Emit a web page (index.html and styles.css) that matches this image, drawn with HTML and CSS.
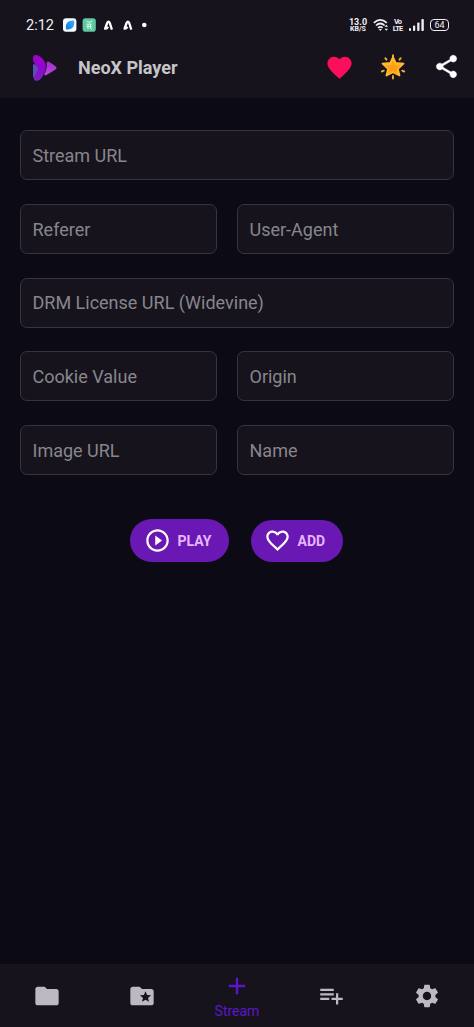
FILE: index.html
```html
<!DOCTYPE html>
<html lang="en">
<head>
<meta charset="utf-8">
<title>NeoX Player</title>
<link rel="stylesheet" href="styles.css">
</head>
<body>
<div class="app">
  <header class="top">
    <div class="status">
      <span class="clock">2:12</span>
      <svg class="apps" width="90" height="16" viewBox="0 0 90 16">
        <defs><linearGradient id="leaf" x1="0" y1="1" x2="1" y2="0"><stop offset="0" stop-color="#1673dd"/><stop offset="1" stop-color="#38b4ff"/></linearGradient></defs>
        <rect x="0" y="1.3" width="13.4" height="13.4" rx="3" fill="#f7fbff"/>
        <path d="M3.200 12.500C1.800 6.500 5 3.300 11 3.600 12.200 9.500 9 13.300 3.200 12.500z" fill="url(#leaf)"/>
        <rect x="19.600" y="1.300" width="13.200" height="13.400" rx="2.800" fill="#5fc9a0"/>
        <path d="M23.300 3.800q1.200 1.500 2.900 1.400 1.700.1 2.900-1.400M23.500 7.200h5.400M25 7.500v4.500M27.500 7.500V11q0 1 1.500 1M23.600 9.500h5" fill="none" stroke="#d8fff0" stroke-width="1"/>
        <g fill="none" stroke="#fff" stroke-width="2.300" stroke-linejoin="round">
          <path d="M48.900 12.600L46.800 6Q45.500 3.400 44.200 6L42 12M41.300 11.500Q43.800 12.200 45 9.700"/>
          <path d="M68.300 12.600L66.200 6Q64.900 3.400 63.600 6L61.400 12M60.700 11.500Q63.200 12.200 64.400 9.700"/>
        </g>
        <circle cx="81.300" cy="8" r="2.300" fill="#fff"/>
      </svg>
      <div class="system">
        <span class="speed"><b>13.0</b><small>KB/S</small></span>
        <svg width="16" height="14" viewBox="0 0 16 14" fill="none" stroke="#eee" stroke-width="1.700"><path d="M.8 4.800q6.500-6 13 0M3 7.500q4.300-4 8.600 0M5 9.900q2.300-2 4.600 0"/><path d="M5.700 11h3.200L7.300 13z" fill="#eee" stroke="none"/><path d="M13.300 6.700l1.800 2h-3.600zM13.300 12.700l1.800-2h-3.600z" fill="#eee" stroke="none"/></svg>
        <span class="volte"><b>Vo</b><b>LTE</b></span>
        <svg class="signal" width="15" height="12" viewBox="0 0 15 12" fill="#eee"><rect y="9" width="2" height="3" rx=".8"/><rect x="4" y="6.500" width="2.200" height="5.500" rx=".8"/><rect x="8.200" y="3.500" width="2.300" height="8.500" rx=".8"/><rect x="12.400" width="2.400" height="12" rx=".8"/></svg>
        <span class="battery">64</span>
      </div>
    </div>
    <div class="bar">
      <svg class="logo" width="26" height="28" viewBox="0 0 26 28">
        <defs>
          <linearGradient id="front" x1="0" y1="0" x2="0" y2="1"><stop offset="0" stop-color="#a500c8"/><stop offset=".5" stop-color="#8a08d0"/><stop offset="1" stop-color="#7a22c0"/></linearGradient>
          <linearGradient id="back" x1="0" y1="0" x2="0" y2="1"><stop offset="0" stop-color="#a32ccc"/><stop offset="1" stop-color="#b94bdc"/></linearGradient>
        </defs>
        <path d="M14.500 9Q15 6.500 17.500 8L23.500 12.300Q25.500 14 23.500 15.500L15 20.800Q11.500 22.300 12.500 19.500 15.500 14 14.500 9z" fill="url(#back)"/>
        <path d="M1 12Q1 9 3.500 10.500L8 15 5 24Q1 25 1 22z" fill="#5b4cb8"/>
        <path d="M1 3.500C1 .5 5 0 8 2.500 13.500 6.500 15.500 12 12.500 18.500 10.500 22.500 9 26.500 5 26.800 1 27 1 23 3.500 20.500Q7 16 5.500 13L2.500 9.500Q1 8 1 3.500z" fill="url(#front)"/>
      </svg>
      <h1>NeoX Player</h1>
      <svg class="heart" width="29" height="29" viewBox="0 0 24 24"><path fill="#fb0e5c" d="M12 21.350l-1.450-1.320C5.400 15.360 2 12.280 2 8.500 2 5.420 4.420 3 7.500 3c1.740 0 3.410.81 4.500 2.090C13.090 3.810 14.760 3 16.500 3 19.580 3 22 5.420 22 8.500c0 3.780-3.400 6.860-8.550 11.540L12 21.350z"/></svg>
      <svg class="star" width="26" height="26" viewBox="0 0 26 26">
        <path d="M13 22v2.500M5.300 4.200L6.500 5.700M20.700 4.200L19.500 5.700M1.800 17.500l2-.8M24.200 17.500l-2-.8M13 1.200v2" stroke="#e8ae2c" stroke-width="1.900" stroke-linecap="round"/>
        <path d="M13 3l2.700 5.900 7.800.8-5.600 5.200 1.600 6.600L13 18.300l-6.500 3.200 1.600-6.600-5.600-5.200 7.800-.8z" fill="#ffb92e" stroke="#ffb92e" stroke-width="1.800" stroke-linejoin="round"/>
        <path d="M13 7.500l2 4 4.600.6-3.300 3 .8 4L13 17l-4.100 2.100.8-4-3.300-3 4.600-.6z" fill="#ffa012" stroke="#ffa012" stroke-linejoin="round"/>
      </svg>
      <svg class="share" width="27" height="27" viewBox="0 0 24 24"><path fill="#fff" stroke="#fff" stroke-width=".45" d="M18 16.080c-.76 0-1.440.3-1.960.77L8.910 12.700c.05-.23.09-.46.09-.7s-.04-.47-.09-.7l7.050-4.110c.54.5 1.250.81 2.040.81 1.660 0 3-1.340 3-3s-1.340-3-3-3-3 1.340-3 3c0 .24.040.47.090.7L8.040 9.810C7.500 9.310 6.790 9 6 9c-1.660 0-3 1.340-3 3s1.340 3 3 3c.79 0 1.500-.31 2.040-.81l7.120 4.160c-.05.21-.08.43-.08.65 0 1.610 1.310 2.920 2.920 2.920s2.920-1.310 2.920-2.920-1.310-2.920-2.920-2.920z"/></svg>
    </div>
  </header>

  <main class="main">
    <div class="form">
      <div class="field wide">Stream URL</div>
      <div class="field">Referer</div>
      <div class="field">User-Agent</div>
      <div class="field wide">DRM License URL (Widevine)</div>
      <div class="field">Cookie Value</div>
      <div class="field">Origin</div>
      <div class="field">Image URL</div>
      <div class="field">Name</div>
    </div>
    <div class="actions">
      <button class="pill play"><svg width="27" height="27" viewBox="0 0 24 24"><path fill="#fff" d="M10 16.500l6-4.500-6-4.500v9zM12 2C6.480 2 2 6.480 2 12s4.480 10 10 10 10-4.480 10-10S17.520 2 12 2zm0 18c-4.410 0-8-3.590-8-8s3.590-8 8-8 8 3.590 8 8-3.590 8-8 8z"/></svg><span>PLAY</span></button>
      <button class="pill add"><svg width="27" height="27" viewBox="0 0 24 24"><path fill="#fff" d="M16.500 3c-1.740 0-3.410.81-4.500 2.090C10.910 3.810 9.240 3 7.500 3 4.420 3 2 5.420 2 8.500c0 3.780 3.400 6.860 8.550 11.540L12 21.350l1.450-1.320C18.600 15.360 22 12.280 22 8.500 22 5.420 19.580 3 16.500 3zm-4.400 15.550l-.1.100-.1-.1C7.140 14.240 4 11.390 4 8.500 4 6.500 5.500 5 7.500 5c1.540 0 3.040.99 3.570 2.360h1.870C13.460 5.990 14.960 5 16.500 5c2 0 3.500 1.500 3.500 3.500 0 2.890-3.140 5.740-7.900 10.050z"/></svg><span>ADD</span></button>
    </div>
  </main>

  <nav class="nav">
    <a><svg width="28" height="28" viewBox="0 0 24 24"><path d="M10 4H4c-1.100 0-1.990.9-1.990 2L2 18c0 1.100.9 2 2 2h16c1.100 0 2-.9 2-2V8c0-1.100-.9-2-2-2h-8l-2-2z"/></svg></a>
    <a><svg width="28" height="28" viewBox="0 0 24 24"><path d="M20 6h-8l-2-2H4c-1.100 0-1.990.9-1.990 2L2 18c0 1.100.9 2 2 2h16c1.100 0 2-.9 2-2V8c0-1.100-.9-2-2-2zm-2.060 11L15 15.280 12.060 17l.78-3.330-2.590-2.240 3.410-.29L15 8l1.340 3.140 3.410.29-2.590 2.240.78 3.330z"/></svg></a>
    <a class="active"><svg width="28" height="28" viewBox="0 0 24 24"><path d="M19 13h-6v6h-2v-6H5v-2h6V5h2v6h6v2z"/></svg><span>Stream</span></a>
    <a><svg width="27" height="27" viewBox="0 0 24 24"><path d="M14 10H2v2h12v-2zm0-4H2v2h12V6zm4 8v-4h-2v4h-4v2h4v4h2v-4h4v-2h-4zM2 16h8v-2H2v2z"/></svg></a>
    <a><svg width="28" height="28" viewBox="0 0 24 24"><path d="M19.140 12.940c.04-.3.060-.61.060-.94 0-.32-.02-.64-.07-.94l2.030-1.580c.18-.14.230-.41.120-.61l-1.920-3.320c-.12-.22-.37-.29-.59-.22l-2.390.96c-.5-.38-1.030-.7-1.620-.94l-.36-2.540c-.04-.24-.24-.41-.48-.41h-3.840c-.24 0-.43.170-.47.410l-.36 2.540c-.59.240-1.130.57-1.620.94l-2.390-.96c-.22-.08-.47 0-.59.220L2.740 8.870c-.12.210-.08.470.12.610l2.030 1.580c-.05.3-.09.63-.09.94s.02.640.07.940l-2.030 1.580c-.18.140-.23.410-.12.610l1.920 3.320c.12.220.37.290.59.220l2.390-.96c.5.380 1.030.7 1.620.94l.36 2.540c.05.240.24.410.48.410h3.840c.24 0 .44-.17.47-.41l.36-2.540c.59-.24 1.130-.56 1.620-.94l2.390.96c.22.080.47 0 .59-.22l1.920-3.320c.12-.22.070-.47-.12-.61l-2.010-1.580zM12 15.600c-1.980 0-3.600-1.620-3.600-3.600s1.620-3.600 3.600-3.600 3.600 1.620 3.600 3.600-1.620 3.600-3.600 3.600z"/></svg></a>
  </nav>
</div>
</body>
</html>
```
FILE: styles.css
```css
* { box-sizing: border-box; }
body { margin: 0; background: #0c0a14; font-family: Roboto, "Liberation Sans", sans-serif; }
svg { display: block; flex: none; }
.app { width: 474px; height: 1027px; display: flex; flex-direction: column; }

.top { height: 98px; background: #16131d; flex: none; }
.status { height: 37px; padding: 13px 25px 0 26px; display: flex; align-items: center; color: #f0eff2; }
.clock { width: 37px; font-size: 14.5px; line-height: 16px; padding-top: 1px; }
.system { margin-left: auto; display: flex; align-items: center; }
.speed { width: 18px; margin-right: 6px; display: flex; flex-direction: column; align-items: center; }
.speed b { font-size: 9px; line-height: 8px; font-weight: 700; }
.speed small { font-size: 7px; line-height: 7px; font-weight: 700; }
.volte { width: 9px; margin: 0 7px 0 4px; display: flex; flex-direction: column; align-items: center; }
.volte b { font-size: 7.5px; line-height: 7px; font-weight: 700; letter-spacing: -.9px; }
.signal { margin-right: 6px; }
.battery { width: 19px; height: 12px; border: 1px solid #eee; border-radius: 4px; font-size: 9px; line-height: 11px; text-align: center; }

.bar { height: 61px; padding: 0 14px 0 32px; display: flex; align-items: flex-start; }
.logo { margin-top: 17px; }
.bar h1 { margin: 20px 0 0 20px; font-size: 18px; line-height: 22px; font-weight: 700; color: #c6c5ca; flex: 1; }
.heart { margin: 16px 26px 0 0; }
.star { margin: 17px 27px 0 0; }
.share { margin: 16px 0 0; }

.main { flex: 1; padding: 32px 20px 0; }
.form { display: grid; grid-template-columns: 197px 217px; column-gap: 20px; row-gap: 23.750px; }
.wide { grid-column: span 2; }
.field { height: 50px; padding: .6px 12px 0 11.500px; border: 1px solid #37343e; border-radius: 7px; background: #16131d; color: #88868c; font-size: 18px; display: flex; align-items: center; }
.actions { margin-top: 44px; padding-left: 110px; display: flex; gap: 22px; align-items: center; }
.pill { height: 43px; border: 0; border-radius: 22px; background: #6a18b3; color: #e6b5ff; padding: 0 0 0 14px; font: 700 14px Roboto, sans-serif; display: flex; align-items: center; gap: 6.500px; }
.pill span { padding-top: 1px; }
.play { width: 99px; }
.add { width: 92px; height: 42px; padding-left: 13px; }

.nav { height: 63px; background: #16131d; display: grid; grid-template-columns: repeat(5, 1fr); }
.nav a { display: flex; flex-direction: column; align-items: center; justify-content: center; fill: #bcbac0; }
.nav .active { justify-content: flex-start; padding-top: 8px; fill: #5b16ca; color: #5b16ca; font-size: 14px; line-height: 16px; }
.active span { margin-top: 3px; }
```
